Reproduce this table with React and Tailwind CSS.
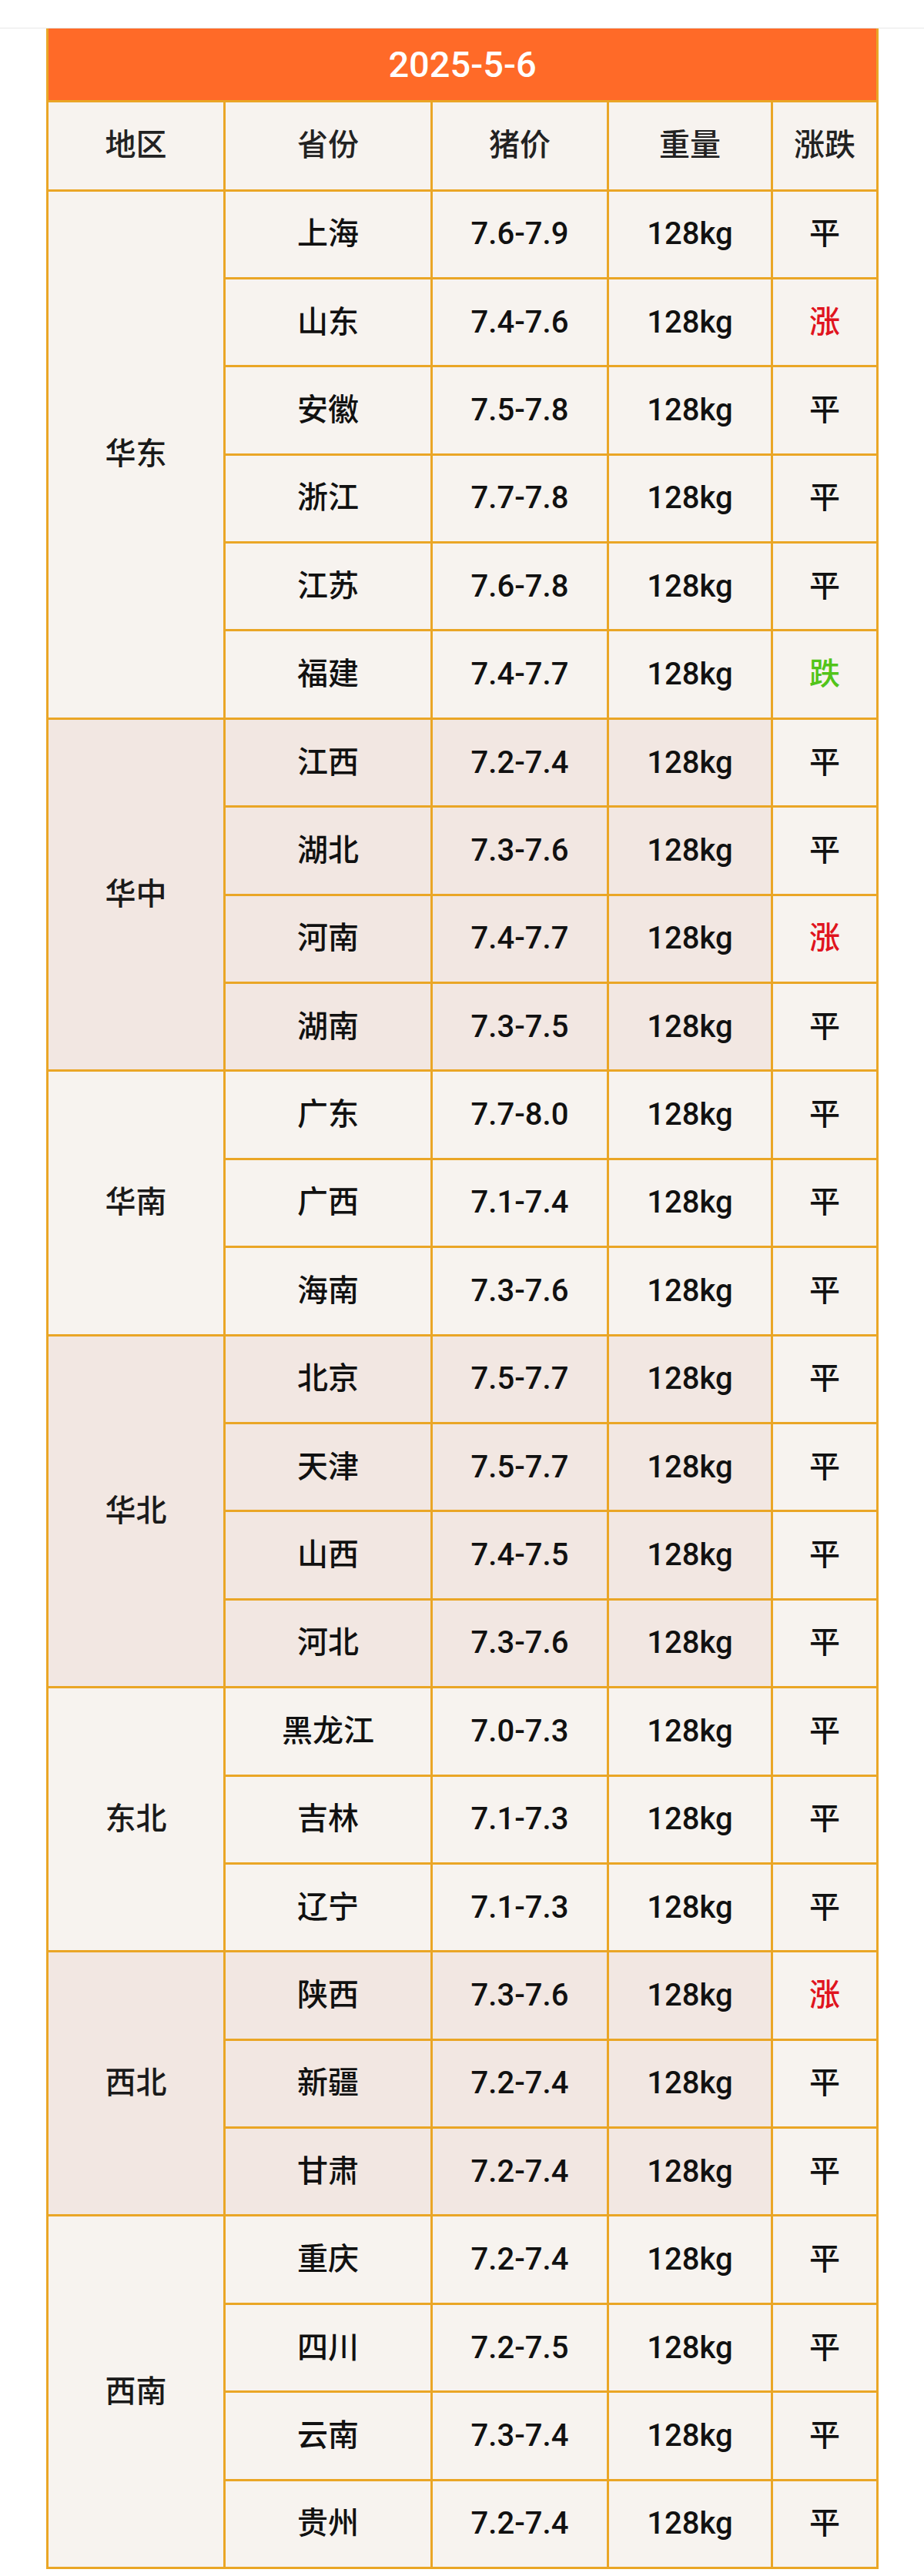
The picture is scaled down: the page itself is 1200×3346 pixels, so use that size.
import React from "react";

const groups = [
  { region: "华东", rows: [["上海", "7.6-7.9", "平"], ["山东", "7.4-7.6", "涨"], ["安徽", "7.5-7.8", "平"], ["浙江", "7.7-7.8", "平"], ["江苏", "7.6-7.8", "平"], ["福建", "7.4-7.7", "跌"]] },
  { region: "华中", rows: [["江西", "7.2-7.4", "平"], ["湖北", "7.3-7.6", "平"], ["河南", "7.4-7.7", "涨"], ["湖南", "7.3-7.5", "平"]] },
  { region: "华南", rows: [["广东", "7.7-8.0", "平"], ["广西", "7.1-7.4", "平"], ["海南", "7.3-7.6", "平"]] },
  { region: "华北", rows: [["北京", "7.5-7.7", "平"], ["天津", "7.5-7.7", "平"], ["山西", "7.4-7.5", "平"], ["河北", "7.3-7.6", "平"]] },
  { region: "东北", rows: [["黑龙江", "7.0-7.3", "平"], ["吉林", "7.1-7.3", "平"], ["辽宁", "7.1-7.3", "平"]] },
  { region: "西北", rows: [["陕西", "7.3-7.6", "涨"], ["新疆", "7.2-7.4", "平"], ["甘肃", "7.2-7.4", "平"]] },
  { region: "西南", rows: [["重庆", "7.2-7.4", "平"], ["四川", "7.2-7.5", "平"], ["云南", "7.3-7.4", "平"], ["贵州", "7.2-7.4", "平"]] },
];

function trendClass(t) {
  if (t === "涨") return "text-[#e0141e]";
  if (t === "跌") return "text-[#52c41a]";
  return "text-[#111111]";
}

export default function App() {
  return (
    <div className="w-[1200px] min-h-[3346px] bg-white font-['Roboto','Noto_Sans_CJK_SC',sans-serif] font-medium">
      <div className="h-[37px] border-b border-[#e8e8e8]" />
      <table className="ml-[60px] w-[1078px] border-collapse table-fixed text-center">
        <colgroup>
          <col className="w-[230px]" />
          <col className="w-[269px]" />
          <col className="w-[229px]" />
          <col className="w-[213px]" />
          <col className="w-[137px]" />
        </colgroup>
        <thead>
          <tr className="h-[94px]">
            <th colSpan={5} className="border-[3px] border-t-0 border-[#eaa626] bg-[#ff6a28] text-[47px] font-medium text-white leading-none">
              2025-5-6
            </th>
          </tr>
          <tr className="h-[116px]">
            {["地区", "省份", "猪价", "重量", "涨跌"].map((h) => (
              <th key={h} className="border-[3px] border-[#eaa626] bg-[#f7f3ef] text-[40px] font-medium text-[#222222] leading-none">
                {h}
              </th>
            ))}
          </tr>
        </thead>
        <tbody>
          {groups.map((g, gi) => {
            const bg = gi % 2 === 1 ? "bg-[#f2e7e2]" : "bg-[#f7f3ef]";
            return g.rows.map((r, ri) => (
              <tr key={g.region + r[0]} className="h-[114.4px]">
                {ri === 0 && (
                  <td rowSpan={g.rows.length} className={`border-[3px] border-[#eaa626] ${bg} text-[40px] text-[#1a1a1a] leading-none`}>
                    {g.region}
                  </td>
                )}
                <td className={`border-[3px] border-[#eaa626] ${bg} text-[40px] text-[#111111] leading-none`}>{r[0]}</td>
                <td className={`border-[3px] border-[#eaa626] ${bg} text-[40px] text-[#111111] leading-none`}>{r[1]}</td>
                <td className={`border-[3px] border-[#eaa626] ${bg} text-[40px] text-[#111111] leading-none`}>128kg</td>
                <td className={`border-[3px] border-[#eaa626] bg-[#f7f3ef] text-[40px] leading-none ${trendClass(r[2])}`}>{r[2]}</td>
              </tr>
            ));
          })}
        </tbody>
      </table>
    </div>
  );
}
